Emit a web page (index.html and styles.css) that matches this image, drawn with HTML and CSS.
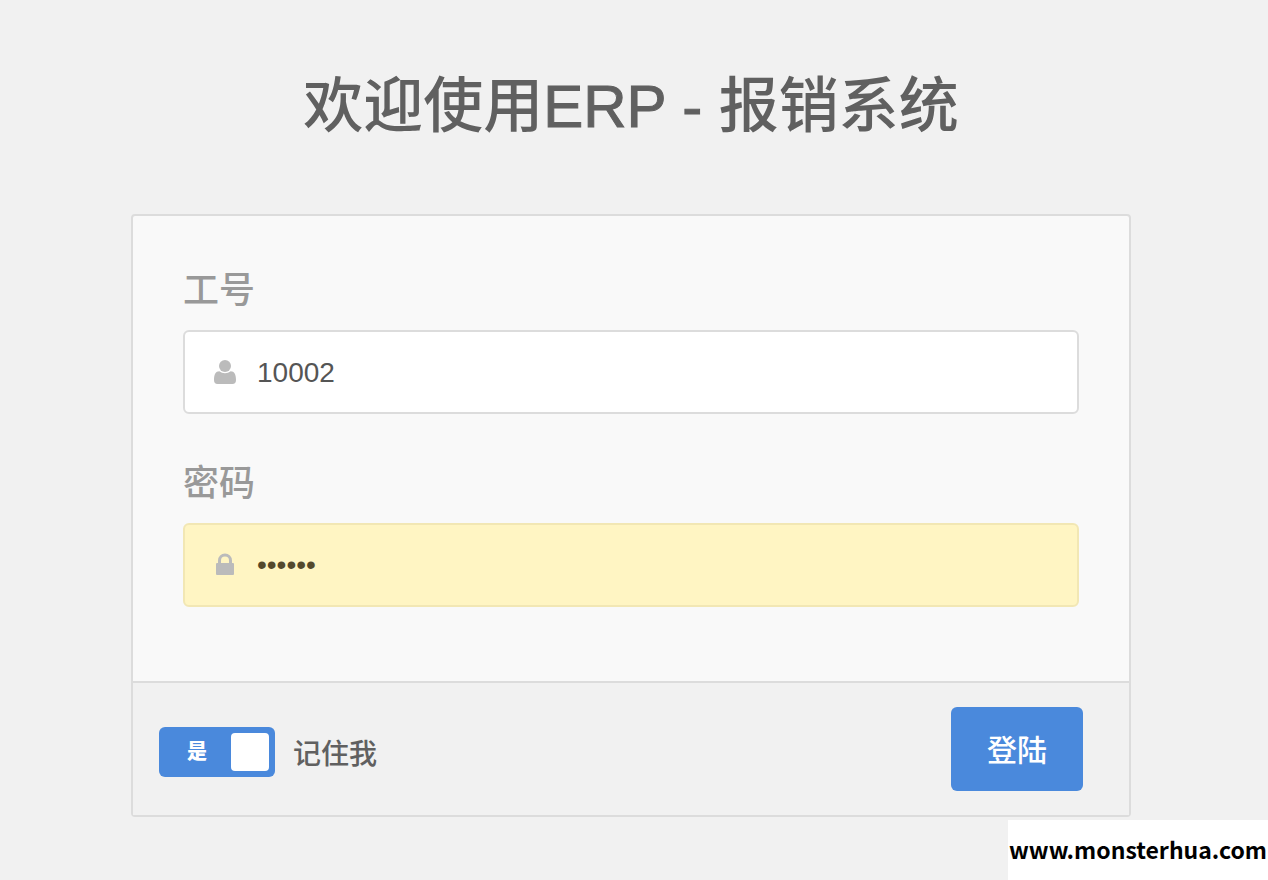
FILE: index.html
```html
<!DOCTYPE html>
<html lang="zh-CN">
<head>
<meta charset="UTF-8">
<meta name="viewport" content="width=device-width, initial-scale=1">
<title>ERP - 报销系统</title>
<link rel="stylesheet" href="styles.css">
</head>
<body>
<main class="login">
  <h1>欢迎使用<span class="latin">ERP - </span>报销系统</h1>

  <form class="card">
    <div class="card-body">
      <div class="field">
        <label for="username">工号</label>
        <div class="input-box">
          <svg class="icon" viewBox="0 0 24 28" aria-hidden="true">
            <circle cx="12" cy="8" r="6"/>
            <path d="M6.300 13.300C8 14.600 9.900 15.200 12 15.200s4-.6 5.700-1.900C21.300 13.300 23 16.500 23 22c0 2.700-1.200 4-3.500 4h-15C2.200 26 1 24.700 1 22c0-5.500 1.700-8.700 5.300-8.700z"/>
          </svg>
          <input id="username" type="text" value="10002">
        </div>
      </div>
      <div class="field">
        <label for="password">密码</label>
        <div class="input-box filled">
          <svg class="icon" viewBox="0 0 24 28" aria-hidden="true">
            <path d="M5 13V9.500a7 7 0 0 1 14 0V13h-3V9.500a4 4 0 0 0-8 0V13z"/>
            <rect x="3" y="12" width="18" height="12" rx="1"/>
          </svg>
          <input id="password" type="password" value="123456">
        </div>
      </div>
    </div>

    <div class="card-footer">
      <label class="remember" for="remember">
        <span class="switch">
          <input id="remember" type="checkbox" checked>
          <span class="switch-text">是</span>
        </span>
        记住我
      </label>
      <button type="submit">登陆</button>
    </div>
  </form>
</main>

<div class="watermark">www.monsterhua.com</div>
</body>
</html>
```

FILE: styles.css
```css
* { box-sizing: border-box; }
body {
  margin: 0;
  padding-right: 6px;
  background: #f1f1f1;
  color: #606060;
  font-family: "Liberation Sans", "Noto Sans CJK SC", sans-serif;
}
.login {
  max-width: 1000px;
  margin: 0 auto;
  padding-top: 62px;
}
h1 {
  margin: 0 0 62px;
  font-size: 60px;
  line-height: 90px;
  font-weight: 500;
  text-align: center;
}
.latin { -webkit-text-stroke: 1px #606060; }
.card {
  border: 2px solid #dcdcdc;
  border-radius: 4px;
  background: #f9f9f9;
}
.card-body { padding: 48px 50px 74px; }
.field + .field { margin-top: 43px; }
.field label {
  display: block;
  margin-bottom: 12px;
  font-size: 36px;
  line-height: 54px;
  font-weight: 500;
  color: #999;
}
.input-box {
  display: flex;
  align-items: center;
  gap: 20px;
  height: 84px;
  padding: 0 28px;
  border: 2px solid #dcdcdc;
  border-radius: 6px;
  background: #fff;
}
.input-box.filled {
  border-color: #f2e7b4;
  background: #fff5c3;
}
.icon {
  width: 24px;
  height: 28px;
  fill: #bbb;
}
.input-box input {
  flex: 1;
  min-width: 0;
  padding: 2px 0 0;
  border: 0;
  outline: 0;
  background: none;
  color: #555;
  font: 28px "Liberation Sans", sans-serif;
}
.input-box.filled input {
  padding: 0;
  color: #54492c;
}

.card-footer {
  display: flex;
  align-items: center;
  justify-content: space-between;
  padding: 24px 46px 24px 26px;
  border-top: 2px solid #dcdcdc;
  background: #f1f1f1;
}
.remember {
  display: flex;
  align-items: center;
  gap: 18px;
  font-size: 28px;
  font-weight: 500;
  margin-top: 6px;
}
.switch {
  position: relative;
  display: flex;
}
.switch input {
  appearance: none;
  display: flex;
  align-items: center;
  justify-content: flex-end;
  width: 116px;
  height: 50px;
  margin: 0;
  padding: 6px;
  border-radius: 6px;
  background: #4a89dc;
}
.switch input::before {
  content: "";
  width: 38px;
  height: 38px;
  border-radius: 4px;
  background: #fff;
}
.switch input:not(:checked) {
  justify-content: flex-start;
  background: #bbb;
}
.switch input:not(:checked) + .switch-text { display: none; }
.switch-text {
  position: absolute;
  left: 28px;
  top: 0;
  font-size: 20px;
  line-height: 50px;
  font-weight: 900;
  color: #fff;
}
button {
  width: 132px;
  height: 84px;
  padding: 0 0 2px;
  border: 0;
  border-radius: 6px;
  background: #4a89dc;
  color: #fff;
  font-family: inherit;
  font-size: 30px;
  font-weight: 500;
}

.watermark {
  position: absolute;
  right: 0;
  bottom: 0;
  width: 260px;
  padding-bottom: 2px;
  background: #fff;
  color: #000;
  font: bold 23px/58px "Noto Sans CJK SC", sans-serif;
  text-align: center;
}
```
